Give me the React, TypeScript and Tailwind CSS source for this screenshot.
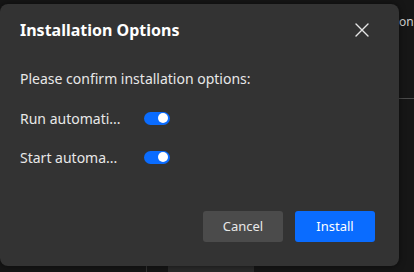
import React from "react";

function Toggle() {
  return (
    <div className="w-[26px] h-[13px] rounded-full bg-[#0a6cff] flex items-center justify-end pr-[2px]">
      <div className="w-[10px] h-[10px] rounded-full bg-white" />
    </div>
  );
}

export default function App() {
  return (
    <div
      className="relative w-[414px] h-[272px] bg-[#161616] overflow-hidden"
      style={{ fontFamily: '"Noto Sans", "Open Sans", sans-serif' }}
    >
      {/* background content */}
      <div className="absolute left-[399px] top-[13px] text-[12px] text-[#cfcfcf] whitespace-nowrap">on</div>
      <div className="absolute left-[399px] top-[98px] w-[15px] h-px bg-[#4a4a4a]" />
      <div className="absolute left-[146px] top-[264px] w-px h-[8px] bg-[#333]" />
      <div className="absolute left-[168px] top-[264px] w-[86px] h-[8px] bg-[#2a2a2a]" />

      {/* dialog */}
      <div className="absolute left-0 top-[4px] w-[399px] h-[262px] rounded-[8px] bg-[#333333] flex flex-col px-[20px] pt-[13px] pb-[24px] shadow-[0_0_6px_rgba(0,0,0,0.5)]">
        <div className="flex items-center justify-between h-[26px]">
          <div className="text-[16px] font-bold text-white leading-none">Installation Options</div>
          <svg width="14" height="14" viewBox="0 0 14 14" className="mr-[10px]">
            <path d="M1 1 L13 13 M13 1 L1 13" stroke="#e6e6e6" strokeWidth="1.4" strokeLinecap="round" />
          </svg>
        </div>
        <div className="mt-[27px] text-[14px] text-[#e8e8e8] leading-[18px]">Please confirm installation options:</div>
        <div className="mt-[21px] flex flex-col gap-[21px]">
          <div className="flex items-center h-[18px]">
            <div className="w-[124px] text-[14px] text-[#e8e8e8]">Run automati...</div>
            <Toggle />
          </div>
          <div className="flex items-center h-[18px]">
            <div className="w-[124px] text-[14px] text-[#e8e8e8]">Start automa...</div>
            <Toggle />
          </div>
        </div>
        <div className="flex-1" />
        <div className="flex justify-end gap-[12px] pr-[4px]">
          <button className="w-[80px] h-[31px] rounded-[3px] bg-[#4b4b4b] text-[13px] text-[#e8e8e8]">Cancel</button>
          <button className="w-[80px] h-[31px] rounded-[3px] bg-[#0a6cff] text-[13px] text-white">Install</button>
        </div>
      </div>
    </div>
  );
}
